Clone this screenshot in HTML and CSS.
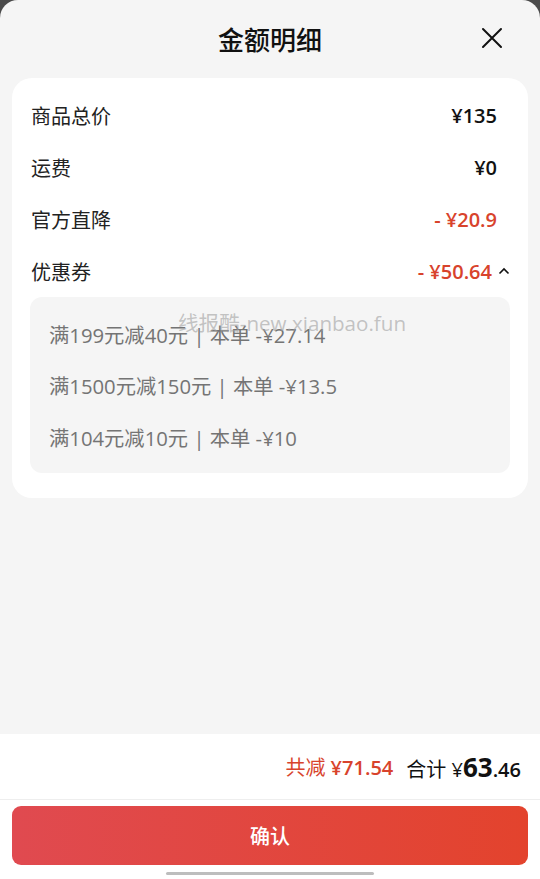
FILE: index.html
```html
<!DOCTYPE html>
<html lang="zh-CN">
<head>
    <meta charset="UTF-8">
    <meta name="viewport" content="width=device-width, initial-scale=1.0">
    <title>金额明细</title>
    <link rel="stylesheet" href="styles.css">
</head>
<body>
    <div class="sheet">
        <div class="header">
            <h1>金额明细</h1>
            <button class="close-btn" aria-label="关闭">
                <svg width="22" height="22" viewBox="0 0 22 22"><path d="M2 2L20 20M20 2L2 20" stroke="#111" stroke-width="2" fill="none" stroke-linecap="round"/></svg>
            </button>
        </div>

        <div class="card">
            <div class="row">
                <span class="label">商品总价</span>
                <span class="value">¥135</span>
            </div>
            <div class="row">
                <span class="label">运费</span>
                <span class="value">¥0</span>
            </div>
            <div class="row">
                <span class="label">官方直降</span>
                <span class="value red">- ¥20.9</span>
            </div>
            <div class="row">
                <span class="label">优惠券</span>
                <span class="value red">- ¥50.64
                    <svg class="chevron" width="12" height="8" viewBox="0 0 12 8"><path d="M1.5 6.5L6 2L10.5 6.5" stroke="#111" stroke-width="1.6" fill="none"/></svg>
                </span>
            </div>
            <div class="coupons">
                <div class="coupon">满199元减40元 | 本单 -¥27.14</div>
                <div class="coupon">满1500元减150元 | 本单 -¥13.5</div>
                <div class="coupon">满104元减10元 | 本单 -¥10</div>
            </div>
            <div class="watermark">线报酷-new.xianbao.fun</div>
        </div>

        <div class="spacer"></div>

        <div class="footer">
            <div class="total">
                <span class="saved">共减 <b>¥71.54</b></span>
                <span class="sum">合计 ¥<b class="big">63</b><b>.46</b></span>
            </div>
            <div class="actions">
                <button class="confirm">确认</button>
                <div class="home-bar"></div>
            </div>
        </div>
    </div>
</body>
</html>
```

FILE: styles.css
```css
* {
    box-sizing: border-box;
}

body {
    margin: 0;
    width: 540px;
    height: 879px;
    overflow: hidden;
    background-color: #4b4b4b;
    font-family: "Open Sans", "Noto Sans CJK SC", sans-serif;
    color: #222;
}

.sheet {
    height: 100%;
    display: flex;
    flex-direction: column;
    background-color: #f5f5f5;
    border-radius: 18px 18px 0 0;
}

.header {
    height: 78px;
    display: flex;
    align-items: center;
    justify-content: center;
    position: relative;
    padding-bottom: 2px;
}

h1 {
    margin: 0;
    font-family: "Noto Sans CJK SC", sans-serif;
    font-size: 26px;
    font-weight: 500;
    color: #111;
}

.close-btn {
    position: absolute;
    right: 37px;
    top: 27px;
    border: none;
    background: none;
    padding: 0;
    width: 22px;
    height: 22px;
}

.card {
    position: relative;
    margin: 0 12px;
    padding: 11px 0 25px;
    background-color: #fff;
    border-radius: 20px;
}

.row {
    height: 52px;
    display: flex;
    align-items: center;
    justify-content: space-between;
    padding: 0 31px 0 19px;
    font-size: 20px;
}

.label {
    color: #222;
}

.value {
    font-weight: 600;
    color: #111;
    display: flex;
    align-items: center;
}

.red {
    color: #d8432c;
}

.chevron {
    margin: 0 -13px 0 6px;
}

.coupons {
    margin: 0 18px;
    padding: 11px 19px 10px;
    background-color: #f5f5f5;
    border-radius: 12px;
}

.coupon {
    height: 51.5px;
    display: flex;
    align-items: center;
    font-size: 20.3px;
    color: #747474;
}

.watermark {
    position: absolute;
    left: 166px;
    top: 229px;
    font-size: 20.6px;
    color: rgba(160, 160, 160, 0.6);
}

.spacer {
    flex: 1;
}

.footer {
    background-color: #fff;
}

.total {
    height: 66px;
    display: flex;
    align-items: center;
    justify-content: flex-end;
    gap: 13px;
    padding-right: 19px;
    border-bottom: 1px solid #eeeeee;
    font-size: 20px;
}

.saved {
    color: #d8432c;
}

.saved b {
    font-weight: 600;
}

.sum {
    color: #111;
}

.sum b {
    font-weight: 600;
}

.sum .big {
    font-size: 26px;
    font-weight: 700;
}

.actions {
    padding: 6px 12px 0;
    height: 79px;
    display: flex;
    flex-direction: column;
    align-items: center;
}

.confirm {
    width: 100%;
    height: 59px;
    border: none;
    border-radius: 9px;
    background: linear-gradient(90deg, #e04a50, #e3432d);
    color: #fff;
    font-family: "Noto Sans CJK SC", sans-serif;
    font-size: 20px;
    font-weight: 500;
}

.home-bar {
    margin-top: 7px;
    width: 208px;
    height: 3px;
    border-radius: 2px;
    background-color: #bdbdbd;
}
```
